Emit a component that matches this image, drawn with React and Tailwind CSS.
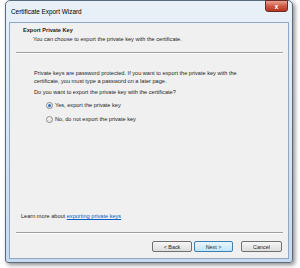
export default function App() {
  const font = { fontFamily: '"Liberation Sans", Arial, sans-serif' };
  return (
    <div className="w-[300px] h-[268px] bg-white overflow-hidden" style={font}>
      <div className="ml-[5px] w-[288px] h-[263px] rounded-t-[5px] rounded-b-[3px] border border-[#5a6a7e] bg-gradient-to-b from-[#e9f0f8] via-[#d9e6f3] to-[#c8daee] shadow-[2px_2px_4px_rgba(0,0,0,0.45)] flex flex-col">
        <div className="h-[21px] flex items-start justify-between pl-[5px] pr-[4px]">
          <span className="mt-[7px] text-[6.4px] leading-[8px] text-black">Certificate Export Wizard</span>
          <div className="w-[23px] h-[12px] -mt-px rounded-b-[3px] border border-[#6b2a24] bg-gradient-to-b from-[#e7a294] via-[#cf5a46] to-[#b7341f] flex items-center justify-center">
            <span className="text-white text-[7px] leading-[7px] font-bold">x</span>
          </div>
        </div>
        <div className="mx-[3px] flex-1 mb-[3px] border border-[#8ea8c4] bg-[#f0f0f0] flex flex-col text-[5.6px] leading-[8px] text-[#1e1e1e]">
          <div className="pl-[13px] pt-[2px]">
            <div className="font-bold mt-[1px]">Export Private Key</div>
            <div className="pl-[10px] mt-[1px]">You can choose to export the private key with the certificate.</div>
          </div>
          <div className="ml-[6px] mr-[5px] mt-[9px] h-[2px] border-t border-[#a0a0a0] border-b-white border-b" />
          <div className="pl-[24px] pr-[8px] mt-[16px] leading-[7px]">
            <div>Private keys are password protected. If you want to export the private key with the</div>
            <div className="mt-px">certificate, you must type a password on a later page.</div>
            <div className="mt-[4px]">Do you want to export the private key with the certificate?</div>
            <div className="pl-[12px] mt-[6px] flex items-center gap-[2px]">
              <span className="w-[7px] h-[7px] rounded-full border border-[#8a8a8a] bg-gradient-to-br from-white to-[#dcdcdc] flex items-center justify-center">
                <span className="w-[3px] h-[3px] rounded-full bg-[#2d6fb8]" />
              </span>
              <span>Yes, export the private key</span>
            </div>
            <div className="pl-[12px] mt-[7px] flex items-center gap-[2px]">
              <span className="w-[7px] h-[7px] rounded-full border border-[#8a8a8a] bg-gradient-to-br from-white to-[#dcdcdc]" />
              <span>No, do not export the private key</span>
            </div>
          </div>
          <div className="flex-1" />
          <div className="pl-[11px]">
            Learn more about <span className="text-[#0a5fc4] underline">exporting private keys</span>
          </div>
          <div className="ml-[6px] mr-[5px] mt-[12px] h-[2px] border-t border-[#a0a0a0] border-b-white border-b" />
          <div className="flex justify-end pr-[6px] mt-[7px] mb-[6px] gap-[2px]">
            <button className="w-[40px] h-[11px] rounded-[2px] border border-[#707070] bg-gradient-to-b from-[#f6f6f6] to-[#dddddd] text-[5.4px] leading-[8px] text-[#1e1e1e]">&lt; Back</button>
            <button className="w-[39px] h-[11px] rounded-[2px] border border-[#3c7fb1] bg-gradient-to-b from-[#eaf6fd] to-[#bee6fd] text-[5.4px] leading-[8px] text-[#1e1e1e]">Next &gt;</button>
            <button className="ml-[6px] w-[41px] h-[11px] rounded-[2px] border border-[#707070] bg-gradient-to-b from-[#f6f6f6] to-[#dddddd] text-[5.4px] leading-[8px] text-[#1e1e1e]">Cancel</button>
          </div>
        </div>
      </div>
    </div>
  );
}
